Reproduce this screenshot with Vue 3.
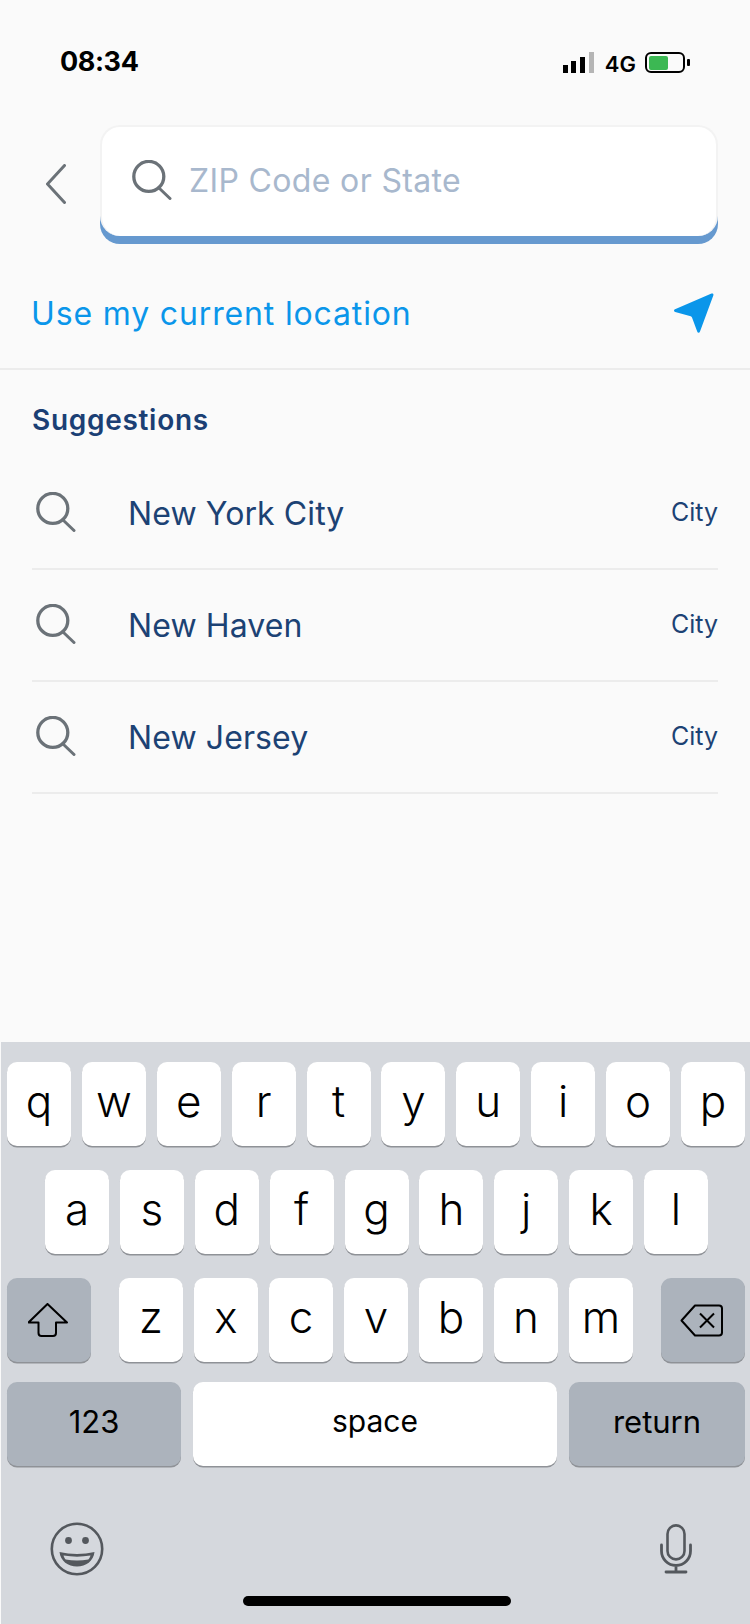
<template>
  <div class="screen">
    <div class="status-bar">
      <span class="time">08:34</span>
      <div class="status-right">
        <div class="signal">
          <span v-for="(bar, i) in signalBars" :key="i" class="bar" :class="{ off: i === 3 }" :style="{ height: bar + 'px' }"></span>
        </div>
        <span class="network">4G</span>
        <div class="battery"><span class="level"></span></div>
        <span class="nub"></span>
      </div>
    </div>

    <div class="search-row">
      <svg class="back" width="20" height="40" viewBox="0 0 20 40" fill="none">
        <path d="M18.500 1.500 1.500 20l17 18.500" stroke="#6b7278" stroke-width="3" stroke-linecap="round" stroke-linejoin="round" />
      </svg>
      <div class="search-box">
        <svg class="search-icon" width="40" height="40" viewBox="0 0 40 40" fill="none">
          <circle cx="16.800" cy="16.400" r="15" stroke="#6b7278" stroke-width="3.300" />
          <path d="m27 28 11 10.500" stroke="#6b7278" stroke-width="3" stroke-linecap="round" />
        </svg>
        <span class="placeholder">ZIP Code or State</span>
      </div>
    </div>

    <div class="location-row">
      <span>Use my current location</span>
      <svg width="40" height="40" viewBox="0 0 40 40" fill="none">
        <path d="M37.500.6c1.200-.5 2.200.4 1.900 1.600L26 38.500c-.5 1.600-2.300 1.600-2.800 0L18 24.500c-.2-.7-.7-1.100-1.300-1.300L1.200 19c-1.500-.4-1.600-2.200-.2-2.800z" fill="#0a96ea" />
      </svg>
    </div>

    <div class="suggestions">
      <h3>Suggestions</h3>
      <div v-for="item in suggestions" :key="item" class="suggestion">
        <svg width="40" height="40" viewBox="0 0 40 40" fill="none">
          <circle cx="16.800" cy="16.400" r="15" stroke="#6b7278" stroke-width="3.300" />
          <path d="m27 28 11 10.500" stroke="#6b7278" stroke-width="3" stroke-linecap="round" />
        </svg>
        <span class="name">{{ item }}</span>
        <span class="kind">City</span>
      </div>
    </div>

    <div class="keyboard">
      <div class="key-row first">
        <div v-for="k in rowOne" :key="k" class="key">{{ k }}</div>
      </div>
      <div class="key-row second">
        <div v-for="k in rowTwo" :key="k" class="key">{{ k }}</div>
      </div>
      <div class="key-row third">
        <div class="key dark wide icon">
          <svg width="40" height="34" viewBox="0 0 40 34" fill="none">
            <path d="M19.500 1 .5 19.500h10V30a3 3 0 0 0 3 3H25a3 3 0 0 0 3-3V19.500h11z" stroke="#000" stroke-width="2" stroke-linejoin="round" />
          </svg>
        </div>
        <div class="letters">
          <div v-for="k in rowThree" :key="k" class="key">{{ k }}</div>
        </div>
        <div class="key dark wide icon">
          <svg width="44" height="33" viewBox="0 0 44 33" fill="none">
            <path d="M15 1.500h24a3 3 0 0 1 3 3v24a3 3 0 0 1-3 3H15L1.500 16.500z" stroke="#000" stroke-width="2" stroke-linejoin="round" />
            <path d="m20 9.500 14 14m0-14-14 14" stroke="#000" stroke-width="2" />
          </svg>
        </div>
      </div>
      <div class="key-row fourth">
        <div class="key dark label num">123</div>
        <div class="key label space">space</div>
        <div class="key dark label ret">return</div>
      </div>
      <div class="key-bottom">
        <svg width="54" height="54" viewBox="0 0 54 54" fill="none">
          <circle cx="27" cy="27" r="25.200" stroke="#54585d" stroke-width="2.600" />
          <circle cx="18.500" cy="18.500" r="3.400" fill="#54585d" />
          <circle cx="35.500" cy="18.500" r="3.400" fill="#54585d" />
          <path d="M9.500 30c11 2.500 24 2.500 35 0-1 9-8.500 14.500-17.500 14.500S10.500 39 9.500 30z" fill="#54585d" />
          <path d="M13.500 33.500c9 1.500 18 1.500 27 0-.5 1.800-1.200 3-2.200 4-7 1.300-15.500 1.300-22.600 0-1-1-1.700-2.200-2.200-4z" fill="#d5d8dd" />
        </svg>
        <svg width="32" height="50" viewBox="0 0 32 50" fill="none">
          <rect x="7.500" y="1.400" width="17" height="34" rx="8.500" stroke="#54585d" stroke-width="2.600" />
          <path d="M1.500 21v6c0 8 6.500 14.500 14.500 14.500S30.500 35 30.500 27v-6M16 41.500v6M6 48h20" stroke="#54585d" stroke-width="2.800" stroke-linecap="round" />
        </svg>
      </div>
      <div class="home-bar"></div>
    </div>
  </div>
</template>

<script setup>
const signalBars = [8, 12, 16, 21];
const suggestions = ['New York City', 'New Haven', 'New Jersey'];
const rowOne = ['q', 'w', 'e', 'r', 't', 'y', 'u', 'i', 'o', 'p'];
const rowTwo = ['a', 's', 'd', 'f', 'g', 'h', 'j', 'k', 'l'];
const rowThree = ['z', 'x', 'c', 'v', 'b', 'n', 'm'];
</script>

<style>
body {
  margin: 0;
}
</style>

<style scoped>
.screen {
  width: 750px;
  height: 1624px;
  background: #fafafa;
  display: flex;
  flex-direction: column;
  font-family: "Inter", "Noto Sans", sans-serif;
  overflow: hidden;
}

.status-bar {
  height: 125px;
  box-sizing: border-box;
  padding: 45px 60px 0 60px;
  display: flex;
  justify-content: space-between;
  align-items: flex-start;
}

.time {
  font-size: 27px;
  font-weight: 700;
  letter-spacing: -0.4px;
  line-height: 34px;
  color: #000;
}

.status-right {
  display: flex;
  align-items: flex-end;
  height: 28px;
}

.signal {
  display: flex;
  align-items: flex-end;
  gap: 3.400px;
  margin-right: 11px;
}

.bar {
  width: 5.300px;
  background: #000;
}

.bar.off {
  background: #b5b5b5;
}

.network {
  font-size: 22px;
  font-weight: 600;
  line-height: 22px;
  margin-right: 9px;
  margin-bottom: -2px;
  color: #000;
}

.battery {
  width: 40px;
  height: 21px;
  box-sizing: border-box;
  border: 2px solid #000;
  border-radius: 6px;
  padding: 1.500px;
}

.level {
  display: block;
  width: 19px;
  height: 100%;
  background: #3cb853;
  border-radius: 2px;
}

.nub {
  width: 3px;
  height: 7px;
  margin: 0 0 7px 2px;
  background: #000;
  border-radius: 1px;
}

.search-row {
  display: flex;
  padding: 0 32px 0 46px;
}

.back {
  margin: 39px 34px 0 0;
}

.search-box {
  width: 618px;
  height: 111px;
  box-sizing: border-box;
  background: #fff;
  border: 2px solid #f3f3f3;
  border-bottom: none;
  border-radius: 20px;
  box-shadow: 0 8px 0 #6699cf;
  margin-bottom: 8px;
  padding: 0 0 3px 30px;
  display: flex;
  align-items: center;
  gap: 17px;
}

.placeholder {
  font-size: 32px;
  letter-spacing: 0.35px;
  color: #a8b8cd;
}

.location-row {
  height: 126px;
  box-sizing: border-box;
  padding: 14px 36px 0 31px;
  border-bottom: 2px solid #ececec;
  display: flex;
  justify-content: space-between;
  align-items: center;
  font-size: 32px;
  letter-spacing: 0.85px;
  color: #0a96ea;
}

.suggestions {
  padding: 0 32px;
}

.suggestions h3 {
  margin: 0;
  height: 88px;
  box-sizing: border-box;
  padding-top: 32px;
  font-size: 28px;
  letter-spacing: 0.7px;
  line-height: 36px;
  font-weight: 600;
  color: #1b3f74;
}

.suggestion {
  height: 112px;
  box-sizing: border-box;
  border-bottom: 2px solid #ececec;
  display: flex;
  align-items: center;
  padding-left: 4px;
  color: #1c4274;
}

.suggestion svg {
  margin: 0 52px 2px 0;
}

.name {
  font-size: 32px;
  letter-spacing: 0.1px;
  flex: 1;
}

.kind {
  font-size: 25px;
  margin-bottom: 2px;
}

.keyboard {
  margin-top: auto;
  margin-left: 1px;
  height: 582px;
  box-sizing: border-box;
  background: #d5d8dd;
  padding: 20px 5px 0 6px;
  display: flex;
  flex-direction: column;
  position: relative;
}

.key-row {
  display: flex;
  justify-content: space-between;
  height: 84px;
  margin-bottom: 24px;
}

.key-row.second {
  padding: 0 37px 0 38px;
}

.key-row.third {
  margin-bottom: 20px;
}

.letters {
  display: flex;
  gap: 11px;
}

.key {
  width: 64px;
  height: 84px;
  background: #fff;
  border-radius: 10px;
  box-shadow: 0 1.500px 0 #8f9297;
  display: flex;
  align-items: center;
  justify-content: center;
  font-size: 44px;
  font-weight: 350;
  color: #000;
  padding-bottom: 6px;
  box-sizing: border-box;
}

.key.dark {
  background: #acb3bc;
}

.key.wide {
  width: 84px;
}

.key.icon {
  padding: 0 2px 0 0;
}

.key.label {
  font-size: 30px;
  font-weight: 400;
  padding-bottom: 6px;
}

.key.num,
.key.ret {
  font-size: 31px;
}

.key.num {
  width: 174px;
}

.key.space {
  width: 364px;
}

.key.ret {
  width: 176px;
}

.key-bottom {
  display: flex;
  justify-content: space-between;
  align-items: center;
  padding: 32px 53px 0 43px;
}

.home-bar {
  position: absolute;
  left: 242px;
  bottom: 18px;
  width: 268px;
  height: 10px;
  border-radius: 5px;
  background: #000;
}
</style>
